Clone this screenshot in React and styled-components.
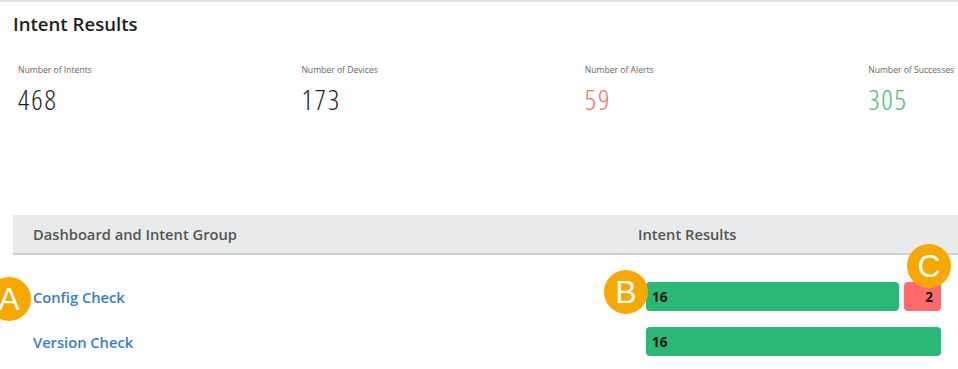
import React from "react";
import styled, { createGlobalStyle } from "styled-components";

const Global = createGlobalStyle`
  html, body { margin: 0; padding: 0; background: #fff; }
  body { font-family: "Open Sans", "Liberation Sans", sans-serif; }
`;

const Page = styled.div`
  width: 958px;
  height: 369px;
  overflow: hidden;
  border-top: 2px solid #e4e4e4;
  box-sizing: border-box;
  position: relative;
`;

const Title = styled.h1`
  margin: 0;
  padding: 10px 0 0 13px;
  font-size: 18.6px;
  font-weight: 600;
  color: #1e1e1e;
  line-height: 24px;
`;

const Stats = styled.div`
  display: grid;
  grid-template-columns: repeat(4, 283.4px);
  padding: 28px 0 0 18px;
  height: 160px;
  box-sizing: border-box;
`;

const Stat = styled.div`
  display: flex;
  flex-direction: column;
  white-space: nowrap;
`;

const Label = styled.div`
  font-size: 8.6px;
  color: #666;
  line-height: 12px;
`;

const Value = styled.div`
  font-size: 28px;
  font-weight: 300;
  font-stretch: 75%;
  letter-spacing: 1.8px;
  line-height: 34px;
  margin-top: 6px;
  color: ${p => p.color || "#222"};
`;

const Table = styled.div`
  margin: 19px 0 0 13px;
`;

const Row = styled.div`
  display: grid;
  grid-template-columns: 605px 1fr;
  align-items: center;
  height: ${p => p.h}px;
`;

const HeadRow = styled(Row)`
  background: #e9eaec;
  border-bottom: 2px solid #cfd0d2;
  box-sizing: border-box;
  margin-bottom: 19px;
`;

const HeadCell = styled.div`
  padding-left: 20px;
  font-size: 14.7px;
  font-weight: 600;
  color: #555;
`;

const NameCell = styled.a`
  padding-left: 20px;
  font-size: 14.7px;
  font-weight: 600;
  color: #3c7cc8;
  text-decoration: none;
`;

const Bars = styled.div`
  display: flex;
  gap: 5px;
  margin: 0 17px 0 28px;
`;

const Segment = styled.div`
  flex: ${p => p.grow} 1 0;
  min-width: ${p => p.min || 0}px;
  height: 29px;
  border-radius: 4px;
  background: ${p => (p.kind === "alert" ? "#ff6b6b" : "#2bb877")};
  display: flex;
  align-items: center;
  justify-content: ${p => (p.kind === "alert" ? "flex-end" : "flex-start")};
  font-size: 13.5px;
  font-weight: 700;
  color: #151515;
`;

const Count = styled.span`
  margin: ${p => (p.right ? "0 8px 0 0" : "0 0 0 6px")};
`;

const Badge = styled.div`
  position: absolute;
  left: ${p => p.x}px;
  top: ${p => p.y}px;
  width: 44px;
  height: 44px;
  border-radius: 50%;
  background: #f6a800;
  color: #fff;
  font-family: "Liberation Sans", Arial, sans-serif;
  font-size: 32px;
  line-height: 44px;
  text-align: center;
  transform: translate(-50%, -50%);
`;

const stats = [
  { label: "Number of Intents", value: 468 },
  { label: "Number of Devices", value: 173 },
  { label: "Number of Alerts", value: 59, color: "#ff6b6b" },
  { label: "Number of Successes", value: 305, color: "#3dbb82" },
];

const rows = [
  { name: "Config Check", success: 16, alert: 2 },
  { name: "Version Check", success: 16, alert: 0 },
];

export default function App() {
  return (
    <Page>
      <Global />
      <Title>Intent Results</Title>
      <Stats>
        {stats.map(s => (
          <Stat key={s.label}>
            <Label>{s.label}</Label>
            <Value color={s.color}>{s.value}</Value>
          </Stat>
        ))}
      </Stats>
      <Table>
        <HeadRow h={40}>
          <HeadCell>Dashboard and Intent Group</HeadCell>
          <HeadCell>Intent Results</HeadCell>
        </HeadRow>
        {rows.map(r => (
          <Row key={r.name} h={45}>
            <NameCell href="#">{r.name}</NameCell>
            <Bars>
              <Segment grow={r.success}>
                <Count>{r.success}</Count>
              </Segment>
              {r.alert > 0 && (
                <Segment kind="alert" grow={r.alert} min={37}>
                  <Count right>{r.alert}</Count>
                </Segment>
              )}
            </Bars>
          </Row>
        ))}
      </Table>
      <Badge x={9} y={297}>A</Badge>
      <Badge x={626} y={290}>B</Badge>
      <Badge x={929} y={264}>C</Badge>
    </Page>
  );
}
